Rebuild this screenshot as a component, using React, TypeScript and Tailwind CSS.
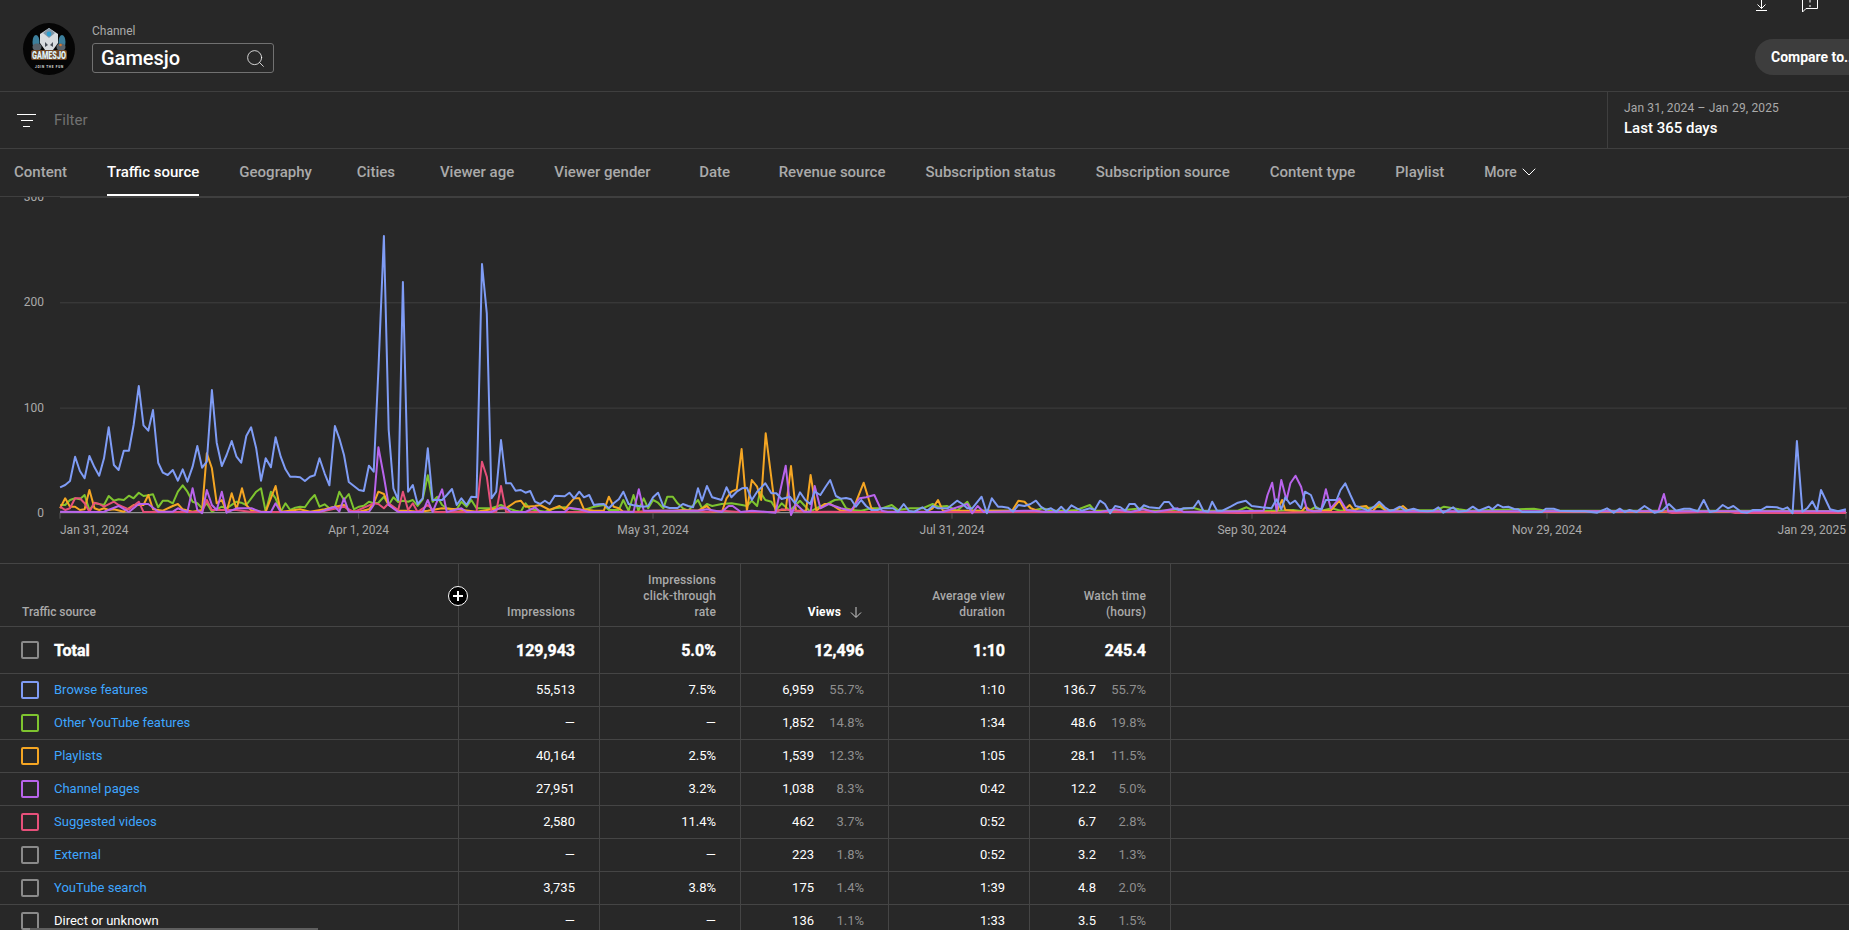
import { Search, ChevronDown } from 'lucide-react'

// chart traces, read off the reference as x,y pairs per crop of the page
const clip = (ox: number, sx: number, oy: number, min: number, max: number, p: number[]) => {
  const out: string[] = []
  for (let i = 0; i < p.length; i += 2) {
    const x = ox + p[i] / sx
    if (x >= min && x < max) out.push(`${x.toFixed(1)},${(oy + p[i + 1] / 3 - 197).toFixed(1)}`)
  }
  return out
}
const trace = (a: number[], b: number[], c: number[]) =>
  [...clip(0, 2.529, 190, 0, 620, a), ...clip(600, 2.45, 380, 620, 1235, b), ...clip(1230, 2.533, 380, 1235, 1850, c)].join(' ')

const blue = trace(
  [152,892,165,885,177,873,190,800,202,843,214,865,226,798,239,832,251,857,263,805,275,712,288,825,300,840,313,782,326,782,338,705,351,588,363,706,375,722,387,660,400,818,412,848,424,855,437,840,450,872,462,838,474,875,487,830,499,768,511,833,523,815,536,600,548,758,561,828,573,795,586,753,598,800,610,818,623,738,635,712,648,775,660,872,672,805,685,832,697,742,710,800,722,838,734,860,747,860,759,862,771,873,784,860,796,856,808,805,821,850,833,886,847,708,858,745,870,795,882,876,895,888,908,900,920,903,933,827,945,845,957,540,971,138,983,720,995,895,1007,930,1019,276,1032,905,1044,885,1056,942,1069,925,1082,775,1094,930,1106,930,1118,930,1130,915,1143,897,1155,945,1167,925,1180,945,1192,920,1205,922,1219,222,1231,370,1243,925,1255,905,1267,750,1280,880,1292,880,1304,902,1317,900,1329,908,1341,903,1353,935,1366,942,1378,932,1390,942,1403,917,1415,918,1428,919,1440,908,1452,925,1465,905,1477,922,1490,915,1502,945,1514,943,1527,942,1540,955,1552,940,1565,928],
  [57,335,70,372,82,376,94,378,107,380,118,378,130,352,142,338,155,378,170,384,190,384,203,372,216,378,228,382,240,325,250,362,262,318,275,352,298,360,310,322,322,352,335,335,348,325,360,323,372,360,385,335,405,310,420,340,432,340,445,357,465,350,478,370,490,337,503,360,515,372,526,335,540,345,552,322,564,300,578,348,590,356,603,354,615,358,627,380,640,360,652,378,665,390,680,390,692,385,705,385,718,385,730,395,744,372,757,393,770,395,790,382,802,392,815,378,828,385,852,385,875,362,888,372,900,385,912,385,935,350,948,400,960,355,975,380,985,380,1000,383,1012,395,1025,375,1040,378,1055,372,1068,362,1080,380,1092,390,1105,385,1118,395,1130,380,1142,395,1155,376,1168,385,1180,392,1200,385,1212,390,1225,362,1237,372,1250,400,1262,378,1275,382,1287,392,1297,372,1310,372,1322,390,1332,376,1345,382,1370,385,1382,366,1394,366,1406,385,1418,390,1430,385,1453,385,1466,362,1478,392,1490,395,1500,365,1512,392,1525,392,1545,380,1565,366],
  [20,368,40,362,55,378,80,382,105,385,118,358,130,388,140,352,152,372,165,362,180,385,190,335,205,345,218,385,232,388,243,360,270,360,280,330,292,310,305,345,318,378,330,382,350,392,365,380,378,365,392,382,405,392,415,390,430,380,445,392,465,386,480,392,500,394,515,392,528,382,540,398,565,382,578,395,600,392,615,380,630,392,655,380,665,388,678,374,692,382,705,380,720,387,730,388,740,396,760,396,790,396,800,386,820,386,835,392,870,394,900,394,930,398,955,385,972,398,987,386,1000,396,1012,390,1030,396,1050,378,1075,398,1095,392,1112,372,1130,392,1150,386,1165,386,1185,394,1200,360,1215,396,1232,392,1248,375,1262,385,1275,378,1295,396,1310,398,1325,390,1345,390,1360,380,1385,382,1400,388,1412,382,1425,400,1436,183,1450,395,1462,385,1475,364,1487,392,1497,330,1520,388,1540,394,1560,388],
)
const green = trace(
  [152,945,165,945,177,930,190,925,202,928,214,915,226,960,239,940,251,942,263,945,275,918,288,932,300,928,313,930,326,917,338,925,351,908,363,918,375,916,387,913,400,952,412,932,424,932,437,940,450,905,462,886,474,905,487,935,499,940,511,955,523,940,536,965,561,950,573,955,598,935,610,938,623,945,648,905,660,895,672,965,685,905,697,925,710,965,722,940,734,960,747,953,759,950,771,952,784,930,796,915,808,950,821,943,833,955,847,950,858,905,870,930,882,912,895,958,908,950,920,947,933,935,945,940,957,938,971,920,983,945,995,922,1007,936,1019,932,1032,935,1044,930,1056,948,1069,928,1082,856,1094,935,1106,920,1118,945,1130,955,1143,958,1155,958,1167,935,1180,950,1192,930,1205,955,1219,955,1231,955,1243,955,1267,945,1280,952,1292,958,1304,962,1317,965,1329,940,1341,958,1353,960,1378,965,1403,955,1428,952,1452,958,1477,960,1502,950,1527,945,1540,960,1565,960],
  [57,360,70,392,82,345,94,392,107,355,118,385,130,360,142,368,155,385,165,350,178,350,190,370,203,385,216,392,240,360,250,385,262,372,275,378,298,372,322,370,348,375,360,378,372,362,385,378,392,335,405,360,420,365,432,390,445,370,465,392,490,362,515,395,540,378,552,375,575,360,590,358,603,385,615,390,640,392,665,385,692,385,715,375,730,390,760,385,790,385,815,372,828,380,850,378,875,392,900,365,912,392,950,392,1000,392,1050,395,1085,385,1105,392,1142,392,1168,390,1200,375,1212,392,1262,392,1330,385,1345,392,1382,392,1418,388,1453,383,1478,392,1565,392],
  [20,392,42,382,60,392,120,392,160,390,195,395,218,380,232,392,258,385,280,392,380,380,395,392,525,390,542,380,580,388,605,392,770,386,800,392,1200,392,1370,392,1430,392,1560,394],
)
const orange = trace(
  [152,955,165,925,177,950,190,950,202,960,214,958,226,900,239,955,251,960,263,955,275,960,288,958,313,965,338,945,363,945,375,915,387,958,412,962,437,948,450,942,462,958,487,965,511,960,523,790,536,835,548,940,561,930,573,965,586,910,598,958,612,895,623,945,636,962,660,965,672,965,697,888,710,965,734,962,759,958,784,965,821,958,847,950,870,945,882,962,908,965,933,958,945,940,957,905,971,912,983,945,1007,962,1032,962,1056,965,1082,962,1118,955,1155,958,1205,965,1243,958,1280,955,1304,935,1317,932,1329,950,1353,948,1366,945,1390,960,1415,948,1428,958,1452,925,1465,925,1477,958,1502,962,1527,962,1540,920,1552,950,1565,955],
  [57,395,94,395,130,392,178,392,203,390,240,392,262,378,275,395,300,392,310,355,322,335,335,328,347,207,360,392,372,300,385,320,395,360,406,160,430,392,445,390,455,390,468,258,480,392,505,392,516,285,530,392,550,372,565,372,590,392,620,388,646,308,665,385,680,395,800,395,815,385,828,360,840,392,900,392,1010,392,1025,362,1040,365,1055,385,1080,395,1200,395,1250,395,1400,395,1565,395],
  [20,396,118,396,132,360,140,390,180,396,192,380,205,392,255,392,277,362,290,390,303,375,315,392,330,380,345,378,360,395,378,372,395,392,420,390,438,378,452,392,600,396,1560,396],
)
const purple = trace(
  [152,965,226,966,263,965,300,948,326,966,351,942,375,942,400,965,437,965,450,955,474,966,487,895,499,960,511,970,523,900,536,945,548,960,561,905,573,968,598,955,636,955,660,966,685,966,697,940,710,966,808,966,847,950,858,965,870,925,882,965,933,966,945,945,957,772,971,860,983,945,1007,966,1069,966,1082,930,1094,966,1118,898,1130,966,1167,955,1180,966,1219,966,1243,966,1267,952,1280,955,1292,966,1329,966,1353,952,1366,966,1428,966,1440,953,1465,958,1490,966,1565,966],
  [60,395,82,396,95,328,107,392,130,392,240,392,262,388,298,396,315,378,325,378,345,396,372,392,430,398,455,257,468,405,480,372,500,395,516,395,526,318,540,385,560,372,590,385,615,392,636,355,652,352,672,345,690,392,705,396,840,396,900,372,912,400,925,378,940,396,1040,392,1065,392,1090,396,1120,396,1225,396,1262,388,1300,396,1330,388,1360,396,1415,385,1430,396,1565,396],
  [20,394,85,392,95,345,107,308,118,392,130,300,143,360,153,310,166,287,180,320,195,390,210,394,230,394,243,328,255,385,277,355,295,390,320,394,520,394,1085,394,1099,342,1110,394,1200,394,1560,394],
)
const red = trace(
  [152,950,165,960,177,955,190,925,202,925,214,940,226,965,239,938,251,942,263,950,288,935,300,945,326,958,351,935,363,966,400,966,437,966,487,966,511,966,523,930,536,960,598,960,636,966,697,966,808,966,870,950,895,966,945,940,957,942,971,955,983,940,1007,960,1019,905,1032,960,1044,940,1056,966,1082,945,1100,966,1205,966,1219,815,1231,860,1243,966,1255,966,1267,888,1280,966,1565,966],
  [60,396,95,396,130,395,240,392,262,396,300,392,340,396,430,396,445,388,480,392,500,396,560,395,620,396,900,396,1040,396,1262,396,1415,396,1565,396],
  [20,399,240,396,380,396,1100,394,1120,399,1260,394,1280,399,1560,399],
)

const COLUMNS = 'grid grid-cols-[458px_141px_141px_148px_141px_141px_1fr]'

const rows = [
  { name: 'Browse features', box: 'border-[#7f9cf5]', imp: '55,513', ctr: '7.5%', views: '6,959', vp: '55.7%', dur: '1:10', wt: '136.7', wp: '55.7%' },
  { name: 'Other YouTube features', box: 'border-[#7ec42f]', imp: '—', ctr: '—', views: '1,852', vp: '14.8%', dur: '1:34', wt: '48.6', wp: '19.8%' },
  { name: 'Playlists', box: 'border-[#f5a623]', imp: '40,164', ctr: '2.5%', views: '1,539', vp: '12.3%', dur: '1:05', wt: '28.1', wp: '11.5%' },
  { name: 'Channel pages', box: 'border-[#b964ec]', imp: '27,951', ctr: '3.2%', views: '1,038', vp: '8.3%', dur: '0:42', wt: '12.2', wp: '5.0%' },
  { name: 'Suggested videos', box: 'border-[#e6507a]', imp: '2,580', ctr: '11.4%', views: '462', vp: '3.7%', dur: '0:52', wt: '6.7', wp: '2.8%' },
  { name: 'External', box: 'border-[#8a8a8a]', imp: '—', ctr: '—', views: '223', vp: '1.8%', dur: '0:52', wt: '3.2', wp: '1.3%' },
  { name: 'YouTube search', box: 'border-[#8a8a8a]', imp: '3,735', ctr: '3.8%', views: '175', vp: '1.4%', dur: '1:39', wt: '4.8', wp: '2.0%' },
  { name: 'Direct or unknown', box: 'border-[#8a8a8a]', plain: true, imp: '—', ctr: '—', views: '136', vp: '1.1%', dur: '1:33', wt: '3.5', wp: '1.5%' },
]

const tabs = ['Content', 'Traffic source', 'Geography', 'Cities', 'Viewer age', 'Viewer gender', 'Date', 'Revenue source', 'Subscription status', 'Subscription source', 'Content type', 'Playlist']

function Avatar() {
  return (
    <svg width="52" height="52" viewBox="0 0 52 52" className="shrink-0">
      <circle cx="26" cy="26" r="26" fill="#050505" />
      <ellipse cx="13" cy="19" rx="3.5" ry="7" fill="#3c7f9c" />
      <ellipse cx="39" cy="19" rx="3.5" ry="7" fill="#3c7f9c" />
      <ellipse cx="14" cy="24" rx="4.5" ry="3.5" fill="#59626a" />
      <ellipse cx="38" cy="24" rx="4.5" ry="3.5" fill="#59626a" />
      <path d="M26 5 L35 11 L35 20 L30 27 L22 27 L17 20 L17 11 Z" fill="#d8dcdf" />
      <path d="M20 10 L26 5 L32 10 L26 15 Z" fill="#8296a6" />
      <path d="M22 19 L25 22 L22 24Z M30 19 L27 22 L30 24Z" fill="#4a5058" />
      <circle cx="26" cy="11" r="2.4" fill="#2f9fd0" />
      <circle cx="37.5" cy="22" r="1.3" fill="#d9772e" />
      <rect x="8" y="27" width="36" height="10" rx="2" fill="#6e4524" />
      <text x="26" y="36" textAnchor="middle" fontSize="10.5" fontWeight="900" textLength="34" lengthAdjust="spacingAndGlyphs" fill="#dff3fa">GAMESJO</text>
      <text x="26" y="44.5" textAnchor="middle" fontSize="3" fontWeight="700" textLength="28" fill="#e5e5e5">JOIN THE FUN</text>
    </svg>
  )
}

function Chart() {
  const gridY = [0, 105.3, 210.6]
  const zero = 315.7
  return (
    <svg width="1849" height="366" viewBox="0 0 1849 366" className="block" fontSize="12" fill="#aaaaaa">
      {gridY.map((y) => (
        <line key={y} x1="60" x2="1847" y1={y + 0.5} y2={y + 0.5} stroke="#3f3f3f" />
      ))}
      <line x1="60" x2="1847" y1={zero} y2={zero} stroke="#aaaaaa" />
      {[60, 358.6, 653, 952, 1252, 1547, 1846].map((x) => (
        <line key={x} x1={x} x2={x} y1={zero} y2={zero + 6} stroke="#555555" />
      ))}
      <text x="44" y="4" textAnchor="end">300</text>
      <text x="44" y="108.5" textAnchor="end">200</text>
      <text x="44" y="214.5" textAnchor="end">100</text>
      <text x="44" y="320" textAnchor="end">0</text>
      <text x="60" y="337">Jan 31, 2024</text>
      <text x="358.6" y="337" textAnchor="middle">Apr 1, 2024</text>
      <text x="653" y="337" textAnchor="middle">May 31, 2024</text>
      <text x="952" y="337" textAnchor="middle">Jul 31, 2024</text>
      <text x="1252" y="337" textAnchor="middle">Sep 30, 2024</text>
      <text x="1547" y="337" textAnchor="middle">Nov 29, 2024</text>
      <text x="1846" y="337" textAnchor="end">Jan 29, 2025</text>
      <g fill="none" strokeWidth="2" strokeLinejoin="round">
        <polyline points={green} stroke="#7ec42f" />
        <polyline points={orange} stroke="#f5a623" />
        <polyline points={red} stroke="#e6507a" />
        <polyline points={purple} stroke="#b964ec" />
        <polyline points={blue} stroke="#7f9cf5" />
      </g>
    </svg>
  )
}

function HeadCell({ children, active }: { children: React.ReactNode; active?: boolean }) {
  return (
    <div className={`border-l border-[#454545] pr-6 pb-[6px] flex items-end justify-end text-right leading-4 tracking-[0.15px] ${active ? 'text-white font-bold' : ''}`}>
      {children}
    </div>
  )
}

function Num({ children, total }: { children: React.ReactNode; total?: boolean }) {
  return (
    <div className={`border-l border-[#454545] pr-6 flex items-center justify-end ${total ? 'font-bold text-base pt-[2px] [-webkit-text-stroke:0.4px_white]' : ''}`}>{children}</div>
  )
}

function Split({ value, pct }: { value: string; pct: string }) {
  return (
    <div className="border-l border-[#454545] pr-6 flex items-center justify-end">
      <span>{value}</span>
      <span className="w-[50px] text-right text-[#8f8f8f]">{pct}</span>
    </div>
  )
}

export default function App() {
  return (
    <div className="relative w-[1849px] h-[930px] overflow-hidden bg-[#282828] text-white [font-family:Roboto,sans-serif]">
      {/* Channel header */}
      <header className="h-[92px] border-b border-[#3f3f3f] flex justify-between pl-[23px]">
        <div className="flex items-start pt-[23px]">
          <Avatar />
          <div className="ml-[17px]">
            <div className="text-xs leading-4 text-[#aaaaaa]">Channel</div>
            <div className="mt-[4px] w-[182px] h-[30px] border border-[#717171] rounded-[3px] flex items-center justify-between pl-2 pr-[7px]">
              <span className="text-[20px] font-medium">Gamesjo</span>
              <Search size={21} strokeWidth={0.9} />
            </div>
          </div>
        </div>
        <div className="w-[94px] shrink-0 overflow-hidden">
          <div className="h-[39px] relative">
            <svg width="12" height="11" viewBox="0 0 12 11" fill="none" stroke="#fff" className="absolute left-[1px] top-0">
              <path d="M5.5 0V8.5M1.5 4.5L5.5 8.5L9.5 4.5M0 10.5H11" />
            </svg>
            <svg width="16" height="13" viewBox="0 0 16 13" fill="none" stroke="#fff" className="absolute left-[47px] top-0">
              <path d="M0.5 12V0M15.5 0V8.5H4L0.5 12M8 0V2.5M8 5V7" />
            </svg>
          </div>
          <div className="w-[130px] h-9 rounded-full bg-[#3d3d3d] pl-4 pb-px flex items-center text-sm font-bold whitespace-nowrap">Compare to...</div>
        </div>
      </header>

      {/* Filter */}
      <div className="h-[57px] border-b border-[#3f3f3f] flex">
        <div className="flex-1 flex items-center pl-[17px] gap-[18px]">
          <div className="w-[19px] flex flex-col items-center gap-[5px]">
            <div className="w-[19px] h-px bg-white" />
            <div className="w-[12px] h-px bg-white" />
            <div className="w-[7px] h-px bg-white" />
          </div>
          <span className="text-[15px] text-[#717171]">Filter</span>
        </div>
        <div className="w-[242px] border-l border-[#3f3f3f] pl-4 pt-[8px]">
          <div className="text-xs leading-4 text-[#aaaaaa] tracking-[0.15px]">Jan 31, 2024 – Jan 29, 2025</div>
          <div className="text-[15px] leading-5 mt-[2px] font-medium">Last 365 days</div>
        </div>
      </div>

      {/* Tabs */}
      <nav className="h-[48px] border-b border-[#3f3f3f] flex items-stretch gap-10 pl-[14px] text-[15px] font-medium text-[#aaaaaa]">
        {tabs.map((t) => (
          <div
            key={t}
            className={`min-w-[48px] flex items-center justify-center pt-[2px] border-b-2 ${t === 'Traffic source' ? 'text-white border-white' : 'border-transparent'}`}
          >
            {t}
          </div>
        ))}
        <div className="flex items-center text-sm pb-[2px]">
          More
          <ChevronDown size={24} strokeWidth={1} className="text-white" />
        </div>
      </nav>

      <Chart />

      {/* Table */}
      <div className="text-[13px]">
        <div className={`${COLUMNS} h-[64px] border-y border-[#454545] text-xs font-medium text-[#aaaaaa]`}>
          <div className="flex items-end pl-[22px] pb-[6px] leading-4">Traffic source</div>
          <HeadCell>Impressions</HeadCell>
          <HeadCell>Impressions<br />click-through<br />rate</HeadCell>
          <HeadCell active>
            <span>Views</span>
            <svg width="12" height="11" viewBox="0 0 12 11" fill="none" stroke="#cccccc" className="ml-[9px] mr-[2px] mb-[2px]">
              <path d="M6 0V10M1 5.5L6 10.5L11 5.5" />
            </svg>
          </HeadCell>
          <HeadCell>Average view<br />duration</HeadCell>
          <HeadCell>Watch time<br />(hours)</HeadCell>
          <div className="border-l border-[#454545]" />
        </div>

        <div className={`${COLUMNS} h-[47px] border-b border-[#454545]`}>
          <div className="flex items-center pl-[21px] gap-[15px]">
            <div className="w-[18px] h-[18px] border-2 border-[#8a8a8a] rounded-[2px]" />
            <span className="text-base font-bold pt-[2px] [-webkit-text-stroke:0.4px_white]">Total</span>
          </div>
          <Num total>129,943</Num>
          <Num total>5.0%</Num>
          <Num total>12,496</Num>
          <Num total>1:10</Num>
          <Num total>245.4</Num>
          <div className="border-l border-[#454545]" />
        </div>

        {rows.map((r) => (
          <div key={r.name} className={`${COLUMNS} h-[33px] border-b border-[#454545]`}>
            <div className="flex items-center pl-[21px] gap-[15px]">
              <div className={`w-[18px] h-[18px] border-2 rounded-[2px] ${r.box}`} />
              <span className={r.plain ? 'text-white' : 'text-[#3ea6ff]'}>{r.name}</span>
            </div>
            <Num>{r.imp}</Num>
            <Num>{r.ctr}</Num>
            <Split value={r.views} pct={r.vp} />
            <Num>{r.dur}</Num>
            <Split value={r.wt} pct={r.wp} />
            <div className="border-l border-[#454545]" />
          </div>
        ))}
      </div>

      {/* add-column button and the scrollbar sit over the table */}
      <div className="absolute left-[448px] top-[586px] w-5 h-5 rounded-full bg-black border border-white flex items-center justify-center">
        <svg width="12" height="12" viewBox="0 0 12 12" stroke="#fff" strokeWidth="2">
          <path d="M6 1V11M1 6H11" />
        </svg>
      </div>
      <div className="absolute left-[30px] bottom-0 w-[288px] h-[2px] bg-[#5f5f5f]" />
    </div>
  )
}
